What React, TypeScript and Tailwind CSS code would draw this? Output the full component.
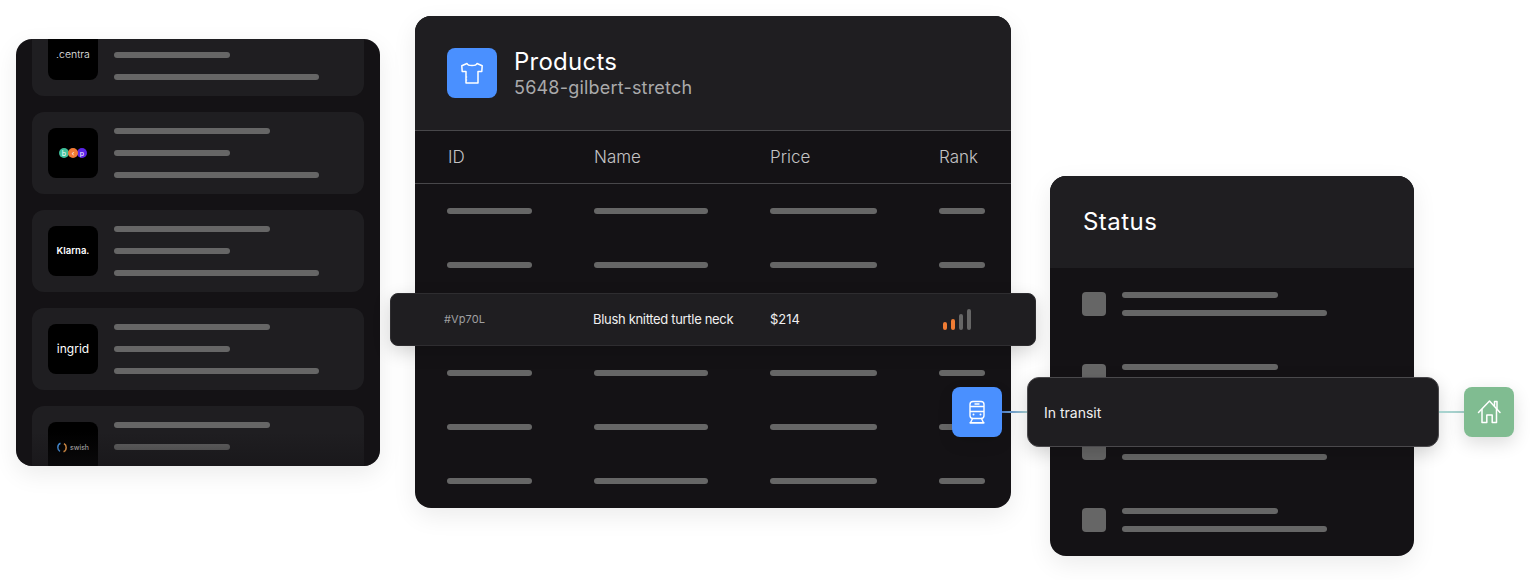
import React from "react";

const Bar = ({ w }: { w: string }) => <div className={`h-[6px] rounded-full bg-[#666666] ${w}`} />;

const Centra = () => (
  <span className="text-[10.5px] font-light leading-none text-[#ececec] font-['Inter',sans-serif]">.centra</span>
);
const Bsp = () => (
  <div className="flex items-center -space-x-[1px]">
    <span className="z-10 flex h-[10px] w-[10px] items-center justify-center rounded-full bg-[#3fbf9b] text-[7px] leading-none text-white">b</span>
    <span className="z-20 flex h-[10px] w-[10px] items-center justify-center rounded-full bg-[#f07a35] text-[7px] leading-none text-white">‹</span>
    <span className="z-10 flex h-[10px] w-[10px] items-center justify-center rounded-full bg-[#5a24e8] text-[7px] leading-none text-white">p</span>
  </div>
);
const Klarna = () => (
  <span className="text-[9.5px] font-semibold leading-none text-white font-['Inter',sans-serif]">Klarna.</span>
);
const Ingrid = () => (
  <span className="text-[12px] font-normal leading-none text-white font-['Inter',sans-serif]">ingrid</span>
);
const Swish = () => (
  <div className="flex items-center gap-[3px]">
    <svg width="10" height="11" viewBox="0 0 10 11" fill="none">
      <path d="M3.5 1.2C1.5 2 .8 3.6.8 5.5c0 1.6.8 3 2.2 3.8" stroke="#4a9cf0" strokeWidth="1.5" />
      <path d="M6.5 9.8c1.9-.8 2.7-2.4 2.7-4.3 0-1.6-.8-3-2.2-3.8" stroke="#f5a04a" strokeWidth="1.5" />
    </svg>
    <span className="text-[7px] leading-none text-[#dddddd] font-['Inter',sans-serif]">swish</span>
  </div>
);

const logos = [<Centra />, <Bsp />, <Klarna />, <Ingrid />, <Swish />];

const ShirtIcon = () => (
  <svg width="50" height="50" viewBox="0 0 50 50" fill="none" stroke="white" strokeWidth="1.5" strokeLinejoin="round">
    <path d="M20 15.5 14.8 17.8l.4 5.7h3.8V35h12V23.5h3.8l.4-5.7L30 15.5c-1 2.7-9 2.7-10 0Z" />
    <path d="M19 29h1.2M19 32h1.2" strokeWidth="1" />
  </svg>
);
const TrainIcon = () => (
  <svg width="50" height="50" viewBox="0 0 50 50" fill="none" stroke="white" strokeWidth="1.4" strokeLinejoin="round">
    <rect x="18" y="14.5" width="14" height="17" rx="3" />
    <path d="M22.5 17h5M18 19.5h14M18 24.5h14" />
    <circle cx="21.5" cy="27.5" r="1" fill="white" stroke="none" />
    <circle cx="28.5" cy="27.5" r="1" fill="white" stroke="none" />
    <path d="M20.5 31.5 18.5 35.8h13l-2-4.3" />
    <path d="M17.5 35.8h15" />
  </svg>
);
const HouseIcon = () => (
  <svg width="50" height="50" viewBox="0 0 50 50" fill="none" stroke="white" strokeWidth="1.5" strokeLinejoin="round" strokeLinecap="round">
    <path d="M14.5 25.5 25.5 14l10.5 11.5" />
    <path d="M18 22.5V35.5h4.8V28h5.4v7.5H32.5V22.5" />
    <path d="M30.5 18.5V14.5H33v7" />
  </svg>
);

const rowsT = [0, 1, 2, 3, 4, 5];
const gridCols = "grid grid-cols-[147px_176px_169px_1fr] items-center px-[32px]";

export default function App() {
  return (
    <div className="flex h-[580px] w-[1538px] items-start overflow-hidden bg-white font-['Inter',sans-serif]">
      {/* Left integrations panel */}
      <div className="relative ml-4 mt-[39px] h-[427px] w-[364px] shrink-0 overflow-hidden rounded-2xl bg-[#141215] shadow-[0_8px_24px_rgba(0,0,0,0.08)]">
        <div className="-mt-[25px] flex flex-col gap-4 px-4">
          {logos.map((logo, i) => (
            <div key={i} className="flex h-[82px] shrink-0 items-start gap-4 rounded-xl bg-[#1f1e21] p-4">
              <div className="flex h-[50px] w-[50px] shrink-0 items-center justify-center rounded-lg bg-black">{logo}</div>
              <div className="flex h-[50px] flex-col justify-between">
                <Bar w="w-[156px]" />
                <Bar w="w-[116px]" />
                <Bar w="w-[205px]" />
              </div>
            </div>
          ))}
        </div>
        <div className="absolute inset-x-0 bottom-0 h-[34px] bg-gradient-to-b from-transparent to-[#141215]/50" />
      </div>

      {/* Products panel */}
      <div className="relative ml-[35px] mt-4 w-[596px] shrink-0 rounded-2xl bg-[#141215] shadow-[0_8px_24px_rgba(0,0,0,0.08)]">
        <div className="flex h-[115px] items-start gap-[17px] rounded-t-2xl border-b border-[#48474a] bg-[#1f1e21] px-[32px] pt-[32px]">
          <div className="flex h-[50px] w-[50px] items-center justify-center rounded-lg bg-[#4a90ff]">
            <ShirtIcon />
          </div>
          <div className="flex flex-col">
            <span className="text-[24px] font-normal leading-[28px] tracking-[0.25px] text-white">Products</span>
            <span className="mt-[1px] text-[18px] leading-[22px] tracking-[0.2px] text-[#aaaaab]">5648-gilbert-stretch</span>
          </div>
        </div>
        <div className={`${gridCols} h-[53px] border-b border-[#48474a] text-[17px] font-light leading-[22px] text-[#c4c4c5]`}>
          <span className="ml-[1px]">ID</span>
          <span>Name</span>
          <span>Price</span>
          <span>Rank</span>
        </div>
        {rowsT.map((r) => (
          <div key={r} className={`${gridCols} h-[54px]`}>
            <Bar w="w-[85px]" />
            <Bar w="w-[114px]" />
            <Bar w="w-[107px]" />
            <Bar w="w-[46px]" />
          </div>
        ))}

        {/* Highlighted row */}
        <div className="absolute left-[-25px] top-[277px] grid h-[53px] w-[646px] grid-cols-[149px_177px_169px_1fr] items-center rounded-lg border border-[#2e2d30] bg-[#1f1e21] pl-[53px] shadow-[0_6px_18px_rgba(0,0,0,0.16)]">
          <span className="text-[11px] tracking-[0.1px] text-[#a0a0a1]">#Vp70L</span>
          <span className="text-[13px] tracking-[-0.32px] text-[#f0f0f0]">Blush knitted turtle neck</span>
          <span className="text-[13px] text-[#f0f0f0]">$214</span>
          <div className="ml-1 flex items-end gap-1">
            <div className="h-[8px] w-1 rounded-full bg-[#f07c34]" />
            <div className="h-[11px] w-1 rounded-full bg-[#f07c34]" />
            <div className="h-[16px] w-1 rounded-full bg-[#666666]" />
            <div className="h-[21px] w-1 rounded-full bg-[#666666]" />
          </div>
        </div>
      </div>

      {/* Status panel */}
      <div className="relative ml-[39px] mt-[176px] h-[380px] w-[364px] shrink-0 rounded-2xl bg-[#141215] shadow-[0_8px_24px_rgba(0,0,0,0.08)]">
        <div className="flex h-[92px] items-start rounded-t-2xl bg-[#1f1e21] pl-[33px] pt-[32px]">
          <span className="text-[24px] font-normal leading-[28px] tracking-[0.45px] text-white">Status</span>
        </div>
        <div className="flex flex-col gap-[48px] pl-[32px] pt-[24px]">
          {[0, 1, 2, 3].map((r) => (
            <div key={r} className="flex h-[24px] items-start gap-4">
              <div className="h-[24px] w-[24px] rounded-[4px] bg-[#666666]" />
              <div className="flex h-[24px] flex-col justify-between">
                <Bar w="w-[156px]" />
                <Bar w="w-[205px]" />
              </div>
            </div>
          ))}
        </div>

        {/* In transit overlay */}
        <div className="absolute left-[-98px] top-[201px] flex items-center">
          <div className="flex h-[50px] w-[50px] items-center justify-center rounded-lg bg-[#4a90ff] shadow-[0_6px_16px_rgba(0,0,0,0.1)]">
            <TrainIcon />
          </div>
          <div className="h-[2px] w-[25px] bg-gradient-to-r from-[#4a78c0] to-[#a8d0d2]" />
          <div className="flex h-[70px] w-[412px] items-center rounded-xl border border-[#4a494c] bg-[#1f1e21] pl-4 text-[14px] text-[#f0f0f0] shadow-[0_6px_18px_rgba(0,0,0,0.16)]">
            In transit
          </div>
          <div className="h-[2px] w-[25px] bg-[#a8d3cf]" />
          <div className="flex h-[50px] w-[50px] items-center justify-center rounded-lg bg-[#80bc91] shadow-[0_6px_18px_rgba(0,0,0,0.14)]">
            <HouseIcon />
          </div>
        </div>
      </div>
    </div>
  );
}
